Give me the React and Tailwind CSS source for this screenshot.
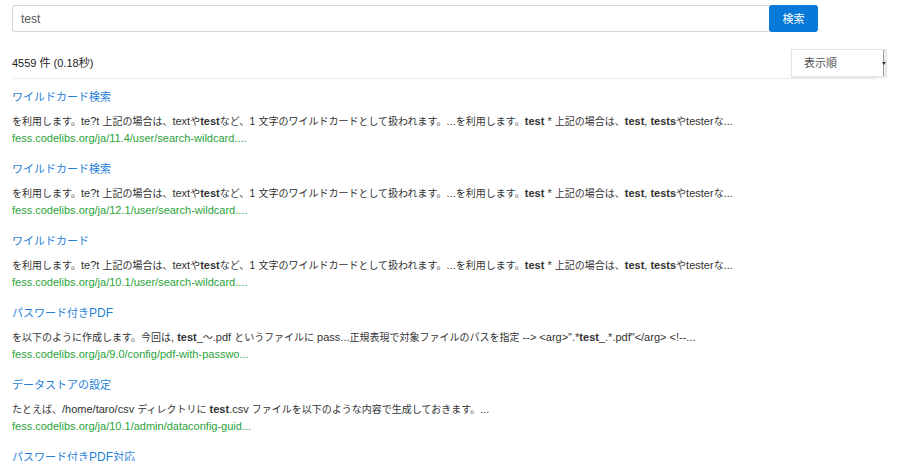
import React from "react";

const font = { fontFamily: '"Liberation Sans", Arial, "Noto Sans CJK JP", sans-serif' };

const CJK = /([\u3000-\u30ff\u3400-\u9fff\uff00-\uffef]+)/;

function Mixed({ text, cjkClass }) {
  const parts = text.split(CJK);
  return parts.map((p, i) =>
    i % 2 === 1 ? (
      <span key={i} className={cjkClass}>{p}</span>
    ) : (
      <React.Fragment key={i}>{p}</React.Fragment>
    )
  );
}

const wild = [
  "を利用します。te?t 上記の場合は、textや",
  { b: "test" },
  "など、1 文字のワイルドカードとして扱われます。...を利用します。",
  { b: "test" },
  " * 上記の場合は、",
  { b: "test" },
  ", ",
  { b: "tests" },
  "やtesterな...",
];

const results = [
  { title: "ワイルドカード検索", snippet: wild, url: "fess.codelibs.org/ja/11.4/user/search-wildcard...." },
  { title: "ワイルドカード検索", snippet: wild, url: "fess.codelibs.org/ja/12.1/user/search-wildcard...." },
  { title: "ワイルドカード", snippet: wild, url: "fess.codelibs.org/ja/10.1/user/search-wildcard...." },
  {
    title: "パスワード付きPDF",
    snippet: [
      "を以下のように作成します。今回は, ",
      { b: "test" },
      "_～.pdf というファイルに pass...正規表現で対象ファイルのパスを指定 --> <arg>\".*",
      { b: "test" },
      "_.*.pdf\"</arg> <!--...",
    ],
    url: "fess.codelibs.org/ja/9.0/config/pdf-with-passwo...",
  },
  {
    title: "データストアの設定",
    snippet: [
      "たとえば、/home/taro/csv ディレクトリに ",
      { b: "test" },
      ".csv ファイルを以下のような内容で生成しておきます。...",
    ],
    url: "fess.codelibs.org/ja/10.1/admin/dataconfig-guid...",
  },
  { title: "パスワード付きPDF対応", snippet: [], url: "" },
];

export default function App() {
  return (
    <div className="w-[897px] h-[461px] overflow-hidden bg-white" style={font}>
      <div className="pl-3 pr-[11px]">
        <div className="flex pt-[5px] w-[806px]">
          <div className="flex-1 h-[27px] border border-[#d6d6d6] rounded-l-[3px] flex items-center pl-2 text-[12px] text-[#555]">
            test
          </div>
          <button className="w-[49px] h-[27px] bg-[#0679d9] text-white text-[12px] rounded-[3px] -ml-[1px]">
            <span className="text-[11px]">検索</span>
          </button>
        </div>
        <div className="flex items-center justify-between mt-[17px] h-[28px] w-[875px]">
          <div className="text-[11px] text-[#222]">
            <Mixed text="4559 件 (0.18秒)" cjkClass="text-[11px]" />
          </div>
          <div className="flex h-[28px] w-[96px] border border-[#e3e3e3] shadow-[0_1px_1px_rgba(0,0,0,0.08)] bg-white">
            <div className="flex-1 flex items-center pl-[12px] text-[11px] text-[#555]">表示順</div>
            <div className="w-[3px] border-l border-[#999] bg-[#eee] relative">
              <span className="absolute left-[-2px] top-[12px] w-0 h-0 border-l-[2px] border-r-[2px] border-t-[3px] border-l-transparent border-r-transparent border-t-[#333]"></span>
            </div>
          </div>
        </div>
        <div className="h-px bg-[#ececec] mt-[1px] w-[865px]"></div>
        <div className="pt-[9px]">
          {results.map((r, i) => (
            <div key={i} className="h-[72px]">
              <div className="text-[12px] leading-[18px] text-[#1f7fd6] h-[18px] whitespace-nowrap">
                <Mixed text={r.title} cjkClass="text-[11px]" />
              </div>
              <div className="mt-[7px] text-[11px] leading-[16px] text-[#333] whitespace-nowrap">
                {r.snippet.map((s, j) =>
                  typeof s === "string" ? (
                    <Mixed key={j} text={s} cjkClass="text-[10px]" />
                  ) : (
                    <b key={j} className="font-bold">{s.b}</b>
                  )
                )}
              </div>
              <div className="text-[11px] leading-[16px] text-[#2aa33a] whitespace-nowrap">{r.url}</div>
            </div>
          ))}
        </div>
      </div>
    </div>
  );
}
